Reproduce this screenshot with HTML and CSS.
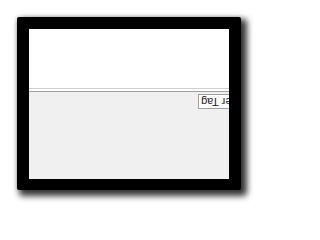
FILE: index.html
```html
<!DOCTYPE html>
<html>
<head>
<meta charset="utf-8">
<link rel="stylesheet" href="styles.css">
</head>
<body>
<div class="frame">
  <div class="pane">
    <div class="top"></div>
    <div class="sep"></div>
    <div class="bottom">
      <div class="btn">Filter Tag</div>
    </div>
  </div>
</div>
</body>
</html>
```
FILE: styles.css
```css
html, body { margin: 0; padding: 0; background: #ffffff; }
body { padding: 17px 0 0 17px; width: 259px; height: 209px; box-sizing: border-box; overflow: hidden; }
.frame {
  width: 224px;
  height: 173px;
  box-sizing: border-box;
  border: 12px solid #000;
  background: #000;
  box-shadow: 4px 4px 6px 2px rgba(0,0,0,0.8), -1px -1px 3px rgba(0,0,0,0.08);
  border-radius: 2px;
}
.pane {
  width: 200px;
  height: 150px;
  overflow: hidden;
  display: flex;
  flex-direction: column;
  background: #f0f0f0;
}
.top { height: 59px; background: #ffffff; border-bottom: 1px solid #d0d0d0; }
.sep { height: 2px; background: #ffffff; border-bottom: 1px solid #a0a0a0; }
.bottom { flex: 1; background: #f0f0f0; padding: 2px 0 0 169px; }
.btn {
  width: 56px;
  height: 15px;
  box-sizing: border-box;
  border: 1px solid #a0a0a0;
  background: #fdfdfd;
  font-family: "Liberation Sans", Arial, sans-serif;
  font-size: 11px;
  line-height: 13px;
  color: #222;
  text-align: right;
  padding-right: 2px;
  white-space: nowrap;
  transform: rotate(180deg);
}
```
